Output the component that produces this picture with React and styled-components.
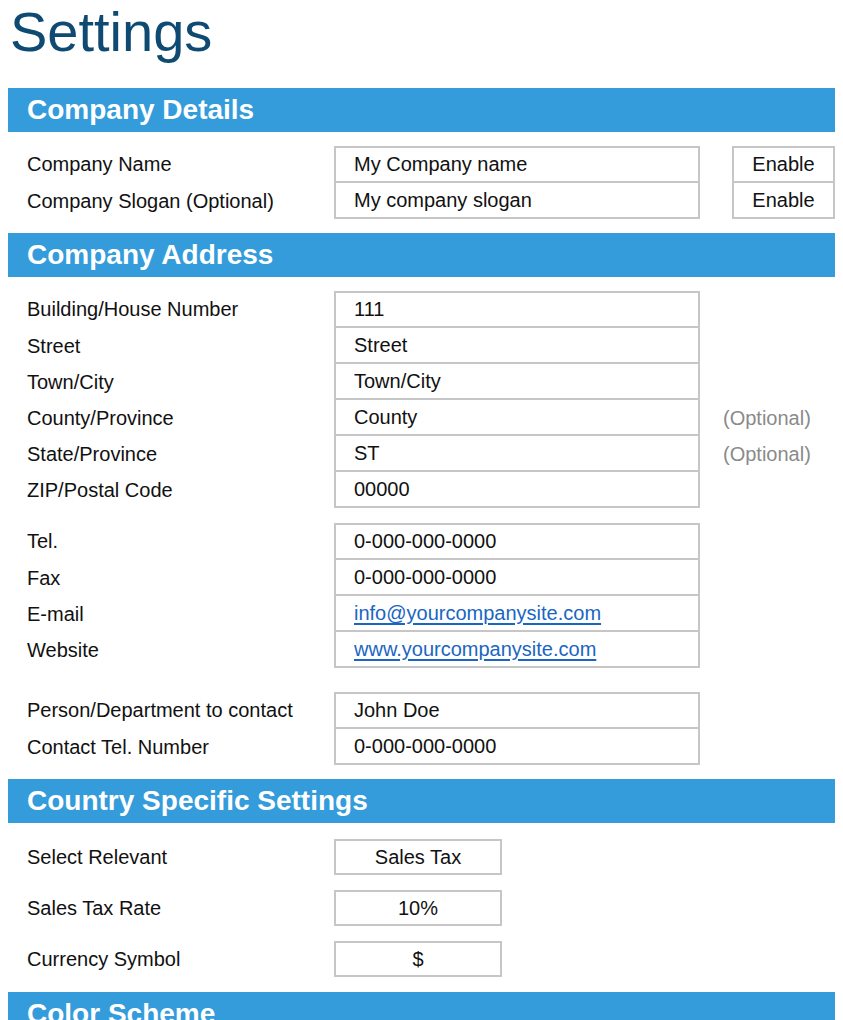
import { createGlobalStyle, styled } from 'styled-components';

const GlobalStyle = createGlobalStyle`
  body {
    margin: 0;
    background: #ffffff;
    font-family: 'Liberation Sans', Arial, sans-serif;
    color: #111111;
  }
`;

const Page = styled.div`
  padding: 0 8px;
  width: 827px;
`;

const Title = styled.h1`
  margin: 0 0 0 2px;
  font-size: 56px;
  line-height: 64px;
  font-weight: 400;
  color: #0f4a72;
`;

const SectionBar = styled.div`
  height: 44px;
  margin-top: ${(p) => p.$top || 0}px;
  background: #349cdb;
  color: #ffffff;
  font-size: 28px;
  font-weight: 700;
  display: flex;
  align-items: center;
  padding-left: 19px;
`;

const SectionBody = styled.div`
  padding: ${(p) => p.$pad || '14px 0 14px'};
  padding-left: 19px;
  display: flex;
  flex-direction: column;
  gap: ${(p) => p.$gap || 0}px;
`;

const Group = styled.div`
  display: flex;
  flex-direction: column;
  margin-top: ${(p) => p.$top || 0}px;
`;

const Row = styled.div`
  display: grid;
  grid-template-columns: 307px auto 1fr;
  align-items: stretch;
  height: ${(p) => (p.$first ? 37 : 36)}px;
  font-size: 20px;
`;

const Label = styled.div`
  display: flex;
  align-items: center;
`;

const Cell = styled.div`
  box-sizing: border-box;
  display: flex;
  align-items: center;
  justify-content: ${(p) => (p.$center ? 'center' : 'flex-start')};
  padding-left: ${(p) => (p.$center ? 0 : 18)}px;
  border: 2px solid #c6c6c6;
  border-top-width: ${(p) => (p.$first ? 2 : 0)}px;
  width: ${(p) => p.$width || 366}px;
  background: #ffffff;
`;

const Toggle = styled(Cell)`
  margin-left: 32px;
  width: 103px;
`;

const Hint = styled.div`
  display: flex;
  align-items: center;
  margin-left: 23px;
  color: #8a8a8a;
`;

const Link = styled.a`
  color: #1a66c2;
  text-decoration: underline;
  text-underline-offset: 3px;
`;

function FieldGroup({ rows, top }) {
  return (
    <Group $top={top}>
      {rows.map((r, i) => (
        <Row key={r.label} $first={i === 0}>
          <Label>{r.label}</Label>
          <Cell $first={i === 0}>
            {r.link ? <Link href="#">{r.value}</Link> : r.value}
          </Cell>
          {r.toggle && <Toggle $first={i === 0} $center>{r.toggle}</Toggle>}
          {r.hint && <Hint>{r.hint}</Hint>}
        </Row>
      ))}
    </Group>
  );
}

const details = [
  { label: 'Company Name', value: 'My Company name', toggle: 'Enable' },
  { label: 'Company Slogan (Optional)', value: 'My company slogan', toggle: 'Enable' },
];

const address = [
  { label: 'Building/House Number', value: '111' },
  { label: 'Street', value: 'Street' },
  { label: 'Town/City', value: 'Town/City' },
  { label: 'County/Province', value: 'County', hint: '(Optional)' },
  { label: 'State/Province', value: 'ST', hint: '(Optional)' },
  { label: 'ZIP/Postal Code', value: '00000' },
];

const contact = [
  { label: 'Tel.', value: '0-000-000-0000' },
  { label: 'Fax', value: '0-000-000-0000' },
  { label: 'E-mail', value: 'info@yourcompanysite.com', link: true },
  { label: 'Website', value: 'www.yourcompanysite.com', link: true },
];

const person = [
  { label: 'Person/Department to contact', value: 'John Doe' },
  { label: 'Contact Tel. Number', value: '0-000-000-0000' },
];

const country = [
  { label: 'Select Relevant', value: 'Sales Tax' },
  { label: 'Sales Tax Rate', value: '10%' },
  { label: 'Currency Symbol', value: '$' },
];

export default function App() {
  return (
    <Page>
      <GlobalStyle />
      <Title>Settings</Title>

      <SectionBar $top={24}>Company Details</SectionBar>
      <SectionBody>
        <FieldGroup rows={details} />
      </SectionBody>

      <SectionBar>Company Address</SectionBar>
      <SectionBody>
        <FieldGroup rows={address} />
        <FieldGroup rows={contact} top={15} />
        <FieldGroup rows={person} top={24} />
      </SectionBody>

      <SectionBar>Country Specific Settings</SectionBar>
      <SectionBody $pad="16px 0 15px" $gap={15}>
        {country.map((r) => (
          <Row key={r.label}>
            <Label>{r.label}</Label>
            <Cell $first $center $width={168}>{r.value}</Cell>
          </Row>
        ))}
      </SectionBody>

      <SectionBar>Color Scheme</SectionBar>
    </Page>
  );
}
